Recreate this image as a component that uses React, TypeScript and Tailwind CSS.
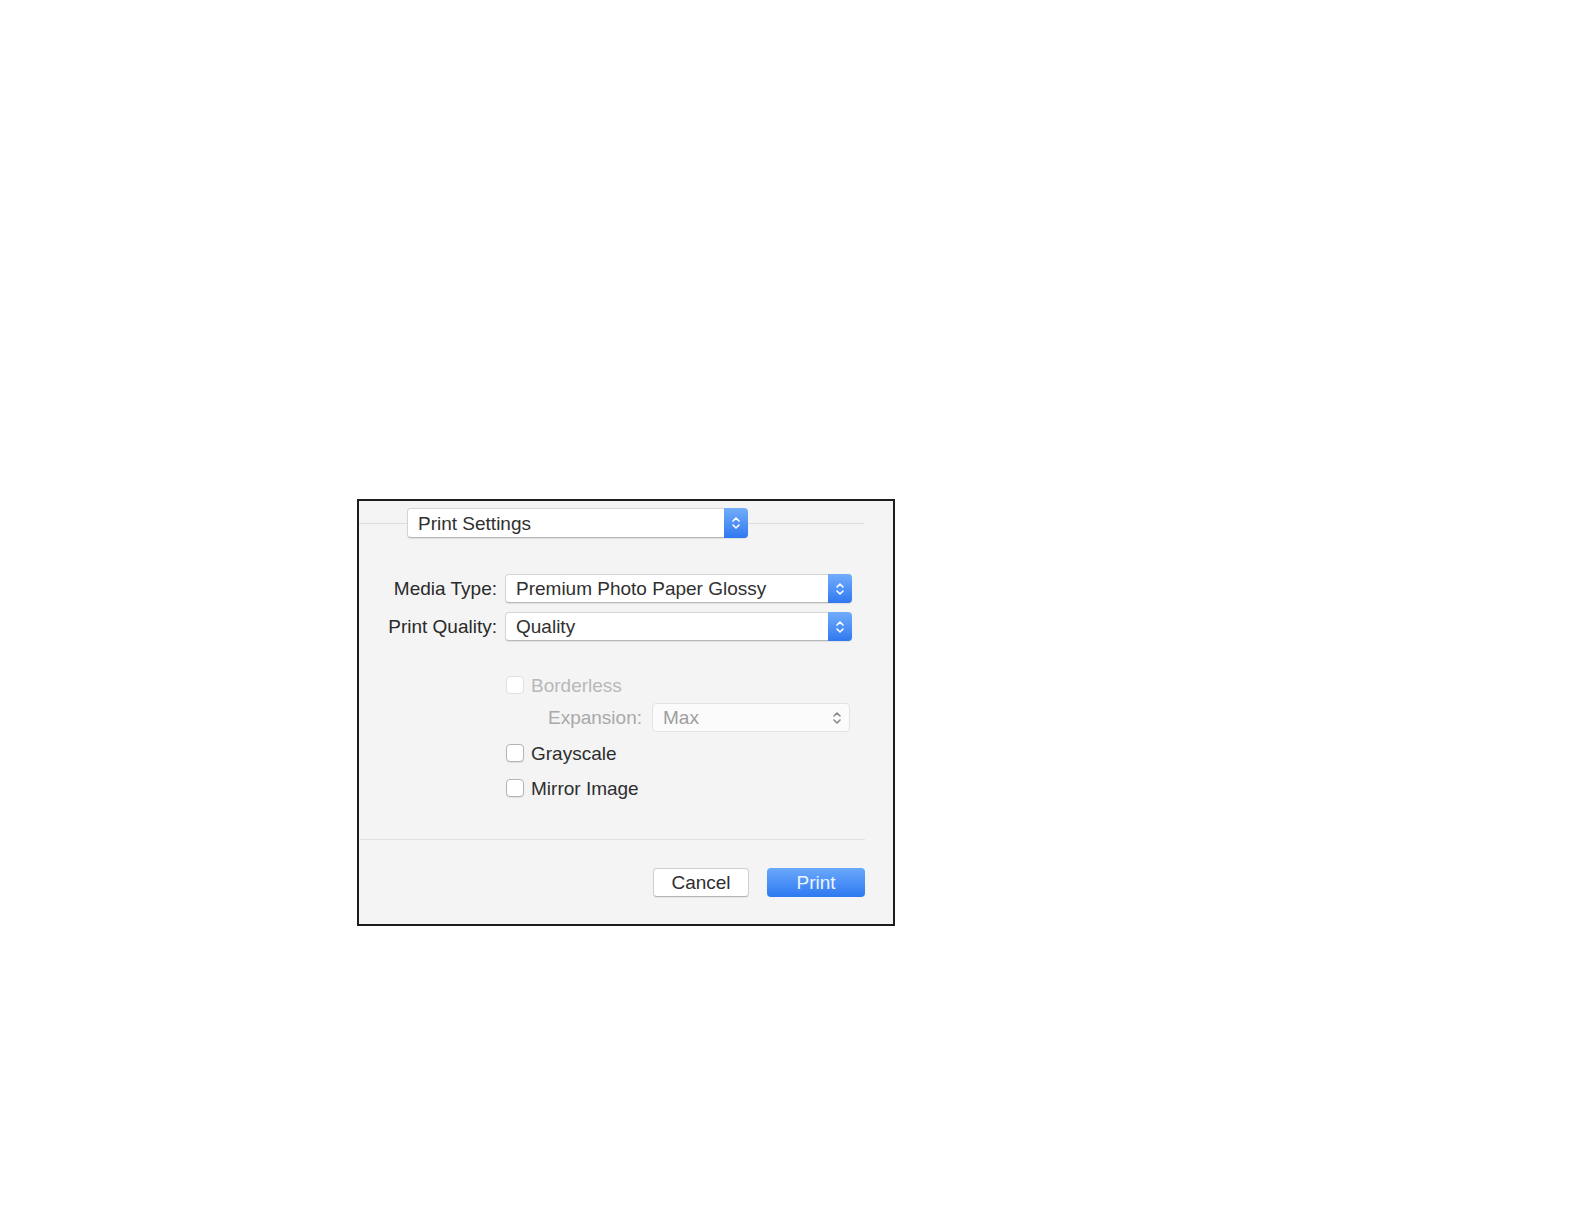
import * as React from "react";

const FONT = "font-['Liberation_Sans',Arial,sans-serif]";

function Stepper({ className = "" }: { className?: string }) {
  return (
    <svg viewBox="0 0 10 16" className={className} fill="none" stroke="currentColor" strokeWidth="1.6" strokeLinecap="round" strokeLinejoin="round">
      <path d="M2 6 L5 3 L8 6" />
      <path d="M2 10 L5 13 L8 10" />
    </svg>
  );
}

function Popup({ label, width, height = "h-[29px]" }: { label: string; width: string; height?: string }) {
  return (
    <div className={`${width} ${height} flex items-stretch rounded-[4px] bg-white border border-[#d4d4d4] border-b-[#b8b8b8] shadow-[0_1px_1px_rgba(0,0,0,0.08)]`}>
      <div className="flex-1 flex items-center pl-[10px] text-[19px] text-[#303030] leading-none">{label}</div>
      <div className="w-[24px] -my-px -mr-px rounded-r-[4px] bg-gradient-to-b from-[#72adfb] to-[#2f78f0] flex items-center justify-center text-white">
        <Stepper className="w-[10px] h-[16px]" />
      </div>
    </div>
  );
}

function Checkbox({ label, disabled = false }: { label: string; disabled?: boolean }) {
  return (
    <div className="flex items-center h-[18px]">
      <div
        className={`w-[18px] h-[18px] rounded-[4px] bg-white border ${
          disabled ? "border-[#e0e0e0]" : "border-[#b4b4b4] shadow-[0_1px_1px_rgba(0,0,0,0.08)]"
        }`}
      />
      <span className={`ml-[7px] text-[19px] leading-none ${disabled ? "text-[#b8b8b8]" : "text-[#2e2e2e]"}`}>{label}</span>
    </div>
  );
}

export default function App() {
  return (
    <div className={`w-full h-[1224px] bg-white overflow-hidden ${FONT}`}>
      <div className="ml-[357px] pt-[499px]">
        <div className="w-[538px] h-[427px] border-2 border-[#1c1c1c] bg-[#f4f4f4] flex flex-col">
          {/* panel selector */}
          <div className="mt-[7px] h-[30px] flex items-center">
            <div className="w-[48px] h-px bg-[#dcdcdc]" />
            <Popup label="Print Settings" width="w-[341px]" height="h-[30px]" />
            <div className="w-[116px] h-px bg-[#dcdcdc]" />
          </div>

          <div className="mt-[36px] grid grid-cols-[138px_347px] gap-x-[8px] gap-y-[9px] items-center">
            <div className="text-right text-[19px] text-[#2a2a2a] leading-none">Media Type:</div>
            <Popup label="Premium Photo Paper Glossy" width="w-[347px]" />
            <div className="text-right text-[19px] text-[#2a2a2a] leading-none">Print Quality:</div>
            <Popup label="Quality" width="w-[347px]" />
          </div>

          <div className="pl-[147px] flex flex-col">
            <div className="mt-[35px]">
              <Checkbox label="Borderless" disabled />
            </div>
            <div className="mt-[9px] h-[29px] flex items-center">
              <div className="w-[136px] text-right text-[19px] text-[#a9a9a9] leading-none">Expansion:</div>
              <div className="ml-[10px] w-[198px] h-[29px] flex items-center rounded-[4px] bg-[#fbfbfb] border border-[#e3e3e3]">
                <span className="flex-1 pl-[10px] text-[19px] text-[#9e9e9e] leading-none">Max</span>
                <Stepper className="w-[10px] h-[16px] mr-[7px] text-[#8a8a8a]" />
              </div>
            </div>
            <div className="mt-[12px]">
              <Checkbox label="Grayscale" />
            </div>
            <div className="mt-[17px]">
              <Checkbox label="Mirror Image" />
            </div>
          </div>

          <div className="mt-[42px] ml-px mr-[28px] h-px bg-[#e2e2e2]" />

          <div className="mt-[28px] pr-[28px] flex justify-end gap-[18px]">
            <button
              type="button"
              className="w-[96px] h-[29px] rounded-[4px] bg-white border border-[#cfcfcf] border-b-[#b5b5b5] shadow-[0_1px_1px_rgba(0,0,0,0.06)] text-[19px] text-[#2e2e2e] leading-none"
            >
              Cancel
            </button>
            <button
              type="button"
              className="w-[98px] h-[29px] rounded-[4px] bg-gradient-to-b from-[#6aa8fa] to-[#2d79f2] text-[19px] text-[#eef4ff] leading-none"
            >
              Print
            </button>
          </div>
        </div>
      </div>
    </div>
  );
}
